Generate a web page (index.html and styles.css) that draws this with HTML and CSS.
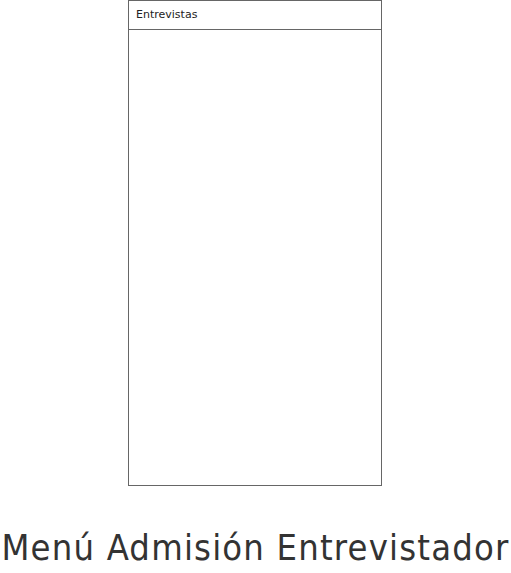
FILE: index.html
```html
<!DOCTYPE html>
<html lang="es">
<head>
  <meta charset="UTF-8" />
  <meta name="viewport" content="width=device-width, initial-scale=1.0" />
  <title>Menú Admisión Entrevistador</title>
  <link rel="stylesheet" href="styles.css">
</head>
<body>
  <div class="page">
    <!-- Panel de entrevistas -->
    <section class="panel">
      <div class="panel-header">Entrevistas</div>
      <div class="panel-body"></div>
    </section>

    <h1 class="title">Menú Admisión Entrevistador</h1>
  </div>
</body>
</html>
```

FILE: styles.css
```css
/* Global Styles */
body {
  font-family: "DejaVu Sans", Verdana, sans-serif;
  margin: 0;
  padding: 0;
  background: #fff;
  color: #333;
}
.page {
  display: flex;
  flex-direction: column;
  align-items: center;
}

/* Panel */
.panel {
  width: 252px;
  height: 484px;
  margin-right: 1px;
  border: 1px solid #666;
  display: flex;
  flex-direction: column;
}
.panel-header {
  height: 28px;
  line-height: 28px;
  padding: 0 7px;
  font-size: 11px;
  color: #222;
  border-bottom: 1px solid #666;
}
.panel-body {
  flex: 1;
}

/* Title */
.title {
  margin: 40px 0 0;
  font-family: "DejaVu Sans Condensed", "DejaVu Sans", sans-serif;
  font-size: 36px;
  font-weight: normal;
  letter-spacing: 1.2px;
  white-space: nowrap;
  line-height: 1.2;
}
```
